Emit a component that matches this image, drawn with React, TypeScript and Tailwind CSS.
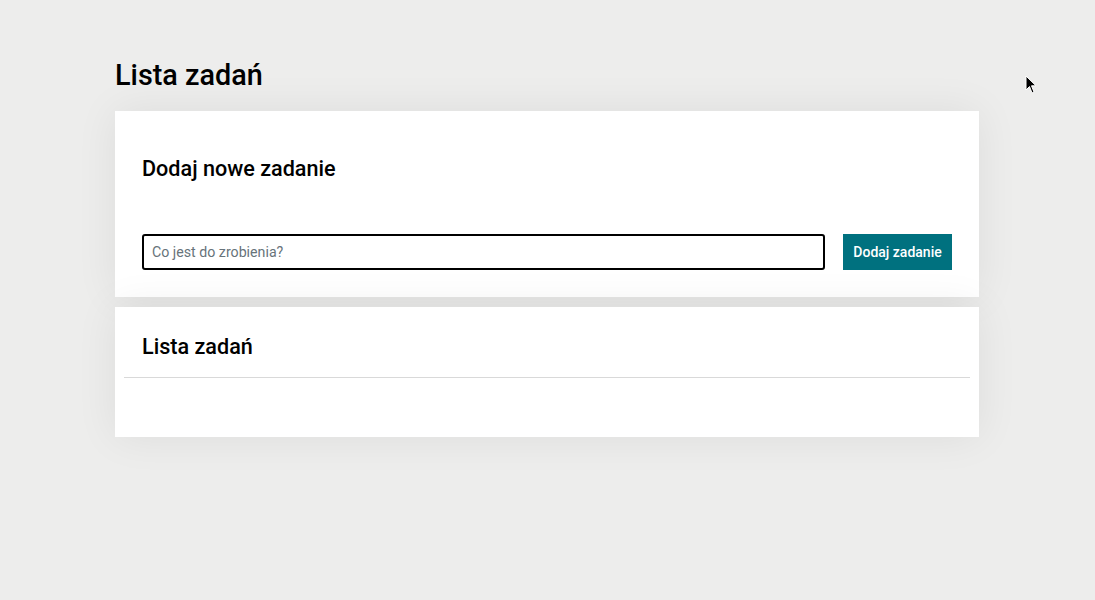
export default function App() {
  return (
    <div className="relative min-h-[600px] w-full bg-[#ededec] font-['Roboto',sans-serif] text-black">
      <main className="ml-[115px] w-[864px] pt-[57px]">
        <h1 className="text-[28.8px] leading-[36px] font-medium mb-[18px]">Lista zadań</h1>

        {/* Formularz */}
        <section className="bg-white px-[27px] pt-[43px] pb-[27px] shadow-[0_0_40px_rgba(0,0,0,0.07)]">
          <h2 className="text-[21.6px] leading-[30px] font-medium mb-[50px]">Dodaj nowe zadanie</h2>
          <div className="flex items-center gap-[18px]">
            <input
              type="text"
              placeholder="Co jest do zrobienia?"
              className="flex-1 min-w-0 h-[36px] border-2 border-black rounded-[3px] px-[8px] text-[14.2px] placeholder:text-[#67737a] outline-none"
            />
            <button className="h-[36px] w-[109px] bg-[#00717f] text-white text-[14px] font-medium">
              Dodaj zadanie
            </button>
          </div>
        </section>

        {/* Lista */}
        <section className="relative mt-[10px] bg-white px-[9px] pt-[25px] pb-[59px] shadow-[0_0_40px_rgba(0,0,0,0.07)]">
          <h2 className="px-[18px] text-[21.6px] leading-[30px] font-medium mb-[15px]">Lista zadań</h2>
          <div className="h-px bg-[#d9d9d9]" />
        </section>
      </main>

      {/* kursor myszy */}
      <svg className="absolute left-[1025px] top-[75px]" width="12" height="20" viewBox="0 0 12 20">
        <path d="M1 1 L1 15 L4.5 11.5 L7 18 L9 17 L6.5 10.8 L11 10.8 Z" fill="black" stroke="white" strokeWidth="1" />
      </svg>
    </div>
  );
}
